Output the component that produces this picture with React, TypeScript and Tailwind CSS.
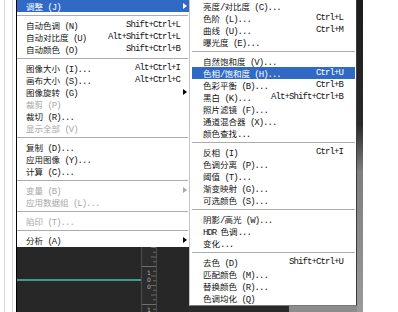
import React from "react";

type Row =
  | { t: "sep" }
  | { t: "item"; label: string; sc?: string; arrow?: boolean; dis?: boolean; hl?: boolean };

const S: Row = { t: "sep" };
const I = (label: string, o: Partial<{ sc: string; arrow: boolean; dis: boolean; hl: boolean }> = {}): Row => ({
  t: "item",
  label,
  ...o,
});

const mainRows: Row[] = [
  I("调整 (J)", { arrow: true, hl: true }),
  S,
  I("自动色调 (N)", { sc: "Shift+Ctrl+L" }),
  I("自动对比度 (U)", { sc: "Alt+Shift+Ctrl+L" }),
  I("自动颜色 (O)", { sc: "Shift+Ctrl+B" }),
  S,
  I("图像大小 (I)...", { sc: "Alt+Ctrl+I" }),
  I("画布大小 (S)...", { sc: "Alt+Ctrl+C" }),
  I("图像旋转 (G)", { arrow: true }),
  I("裁剪 (P)", { dis: true }),
  I("裁切 (R)..."),
  I("显示全部 (V)", { dis: true }),
  S,
  I("复制 (D)..."),
  I("应用图像 (Y)..."),
  I("计算 (C)..."),
  S,
  I("变量 (B)", { dis: true, arrow: true }),
  I("应用数据组 (L)...", { dis: true }),
  S,
  I("陷印 (T)...", { dis: true }),
  S,
  I("分析 (A)", { arrow: true }),
];

const subRows: Row[] = [
  I("亮度/对比度 (C)..."),
  I("色阶 (L)...", { sc: "Ctrl+L" }),
  I("曲线 (U)...", { sc: "Ctrl+M" }),
  I("曝光度 (E)..."),
  S,
  I("自然饱和度 (V)..."),
  I("色相/饱和度 (H)...", { sc: "Ctrl+U", hl: true }),
  I("色彩平衡 (B)...", { sc: "Ctrl+B" }),
  I("黑白 (K)...", { sc: "Alt+Shift+Ctrl+B" }),
  I("照片滤镜 (F)..."),
  I("通道混合器 (X)..."),
  I("颜色查找..."),
  S,
  I("反相 (I)", { sc: "Ctrl+I" }),
  I("色调分离 (P)..."),
  I("阈值 (T)..."),
  I("渐变映射 (G)..."),
  I("可选颜色 (S)..."),
  S,
  I("阴影/高光 (W)..."),
  I("HDR 色调..."),
  I("变化..."),
  S,
  I("去色 (D)", { sc: "Shift+Ctrl+U" }),
  I("匹配颜色 (M)..."),
  I("替换颜色 (R)..."),
  I("色调均化 (Q)"),
];

function Txt({ s }: { s: string }) {
  const parts = s.match(/[\x00-\x7f]+|[^\x00-\x7f]+/g) || [];
  return (
    <>
      {parts.map((p, i) =>
        /^[\x00-\x7f]/.test(p) ? (
          <span key={i} className="text-[9px] tracking-[-1px] font-['Liberation_Mono',monospace]">
            {p}
          </span>
        ) : (
          <span key={i} className="text-[8.5px] font-['Noto_Sans_CJK_SC',sans-serif]">
            {p}
          </span>
        )
      )}
    </>
  );
}

function color(r: Extract<Row, { t: "item" }>) {
  if (r.hl) return "bg-[#316ac5] text-white";
  if (r.dis) return "text-[#a8a8a8]";
  return "text-[#141414]";
}

function arrowColor(r: Extract<Row, { t: "item" }>) {
  if (r.hl) return "border-l-white";
  if (r.dis) return "border-l-[#a8a8a8]";
  return "border-l-black";
}

function MainMenu() {
  return (
    <div className="flex flex-col">
      {mainRows.map((r, i) =>
        r.t === "sep" ? (
          <div key={i} className="h-[7px] pt-[3px]">
            <div className="h-px mr-[1px] bg-[#acacac]" />
          </div>
        ) : (
          <div
            key={i}
            className={`flex items-center h-[12px] leading-[12px] pl-[9px] pr-[3px] whitespace-pre ${color(r)}`}
          >
            <span>
              <Txt s={r.label} />
            </span>
            <span className="flex-1" />
            {r.sc && (
              <span className="text-[9px] tracking-[-0.9px] font-['Liberation_Mono',monospace]">{r.sc}</span>
            )}
            <span className="w-[6px] flex items-center">
              {r.arrow && (
                <span
                  className={`ml-[3px] w-0 h-0 border-y-[3.5px] border-y-transparent border-l-[4px] ${arrowColor(r)}`}
                />
              )}
            </span>
          </div>
        )
      )}
    </div>
  );
}

function SubMenu() {
  return (
    <div className="flex flex-col">
      {subRows.map((r, i) =>
        r.t === "sep" ? (
          <div key={i} className="h-[7px] pt-[3px]">
            <div className="h-px ml-[2px] mr-[1px] bg-[#acacac]" />
          </div>
        ) : (
          <div
            key={i}
            className={`flex items-center h-[12px] leading-[12px] ml-[2px] mr-[1px] pl-[11px] pr-[12px] whitespace-pre ${color(r)}`}
          >
            <span>
              <Txt s={r.label} />
            </span>
            <span className="flex-1" />
            {r.sc && (
              <span className="text-[9px] tracking-[-0.9px] font-['Liberation_Mono',monospace]">{r.sc}</span>
            )}
          </div>
        )
      )}
    </div>
  );
}

function Ruler() {
  const minor: number[] = [];
  for (let k = -4; k <= 9; k++) minor.push(19 + k * 4.75);
  return (
    <svg width="16" height="65" viewBox="0 0 16 65" className="block">
      <rect x="0" y="0" width="16" height="65" fill="#2c2c2c" />
      <line x1="0.5" y1="0" x2="0.5" y2="65" stroke="#4e4e4e" />
      <line x1="15.5" y1="0" x2="15.5" y2="65" stroke="#4e4e4e" />
      {minor.map((y, i) => (
        <line key={i} x1={i % 2 === 0 ? 10 : 12} y1={y + 0.5} x2="15" y2={y + 0.5} stroke="#6a6a6a" />
      ))}
      <line x1="1" y1="19.5" x2="15" y2="19.5" stroke="#6e6e6e" />
      <line x1="1" y1="57.5" x2="15" y2="57.5" stroke="#6e6e6e" />
      <text x="6" y="28" fontSize="6" fill="#b4b4b4" fontFamily="DejaVu Sans, sans-serif">1</text>
      <text x="6" y="35" fontSize="6" fill="#b4b4b4" fontFamily="DejaVu Sans, sans-serif">0</text>
      <text x="6" y="42" fontSize="6" fill="#b4b4b4" fontFamily="DejaVu Sans, sans-serif">0</text>
      <text x="6" y="65" fontSize="6" fill="#b4b4b4" fontFamily="DejaVu Sans, sans-serif">1</text>
    </svg>
  );
}

export default function App() {
  return (
    <div className="flex w-[398px] h-[312px] bg-white overflow-hidden">
      {/* left gutter */}
      <div className="flex w-[16px] shrink-0">
        <div className="w-[4px]" />
        <div className="w-px bg-[#d8d8d8]" />
        <div className="w-[7px]" />
        <div className="w-px bg-[#d8d8d8]" />
        <div className="w-[3px]" />
      </div>

      {/* main menu column */}
      <div className="flex flex-col w-[173px] shrink-0 border-l border-black">
        <div className="h-[247px] bg-white">
          <MainMenu />
        </div>
        <div className="flex-1 flex bg-[#272727]">
          <div className="w-[124px] flex flex-col">
            <div className="h-[32px]" />
            <div className="h-[2px] bg-[#3e9a92]" />
          </div>
          <Ruler />
          <div className="flex-1" />
        </div>
      </div>

      {/* submenu column */}
      <div className="flex flex-col w-[168px] shrink-0">
        <div className="h-[306px] bg-white border-l border-[#c4c4c4] border-r border-r-[#3c3c3c] border-b border-b-[#7a7a7a]">
          <SubMenu />
        </div>
        <div className="flex-1 flex">
          <div className="w-[100px] bg-[#2a2a2a]" />
          <div className="flex-1 bg-[#8c8c8c]" />
        </div>
      </div>

      {/* shadow strip */}
      <div className="w-[6px] shrink-0 bg-[linear-gradient(to_bottom,#1c1c1c_0%,#2a2a2a_40%,#7e7e7e_55%,#9a9a9a_100%)]" />

      <div className="flex-1 bg-white" />
    </div>
  );
}
